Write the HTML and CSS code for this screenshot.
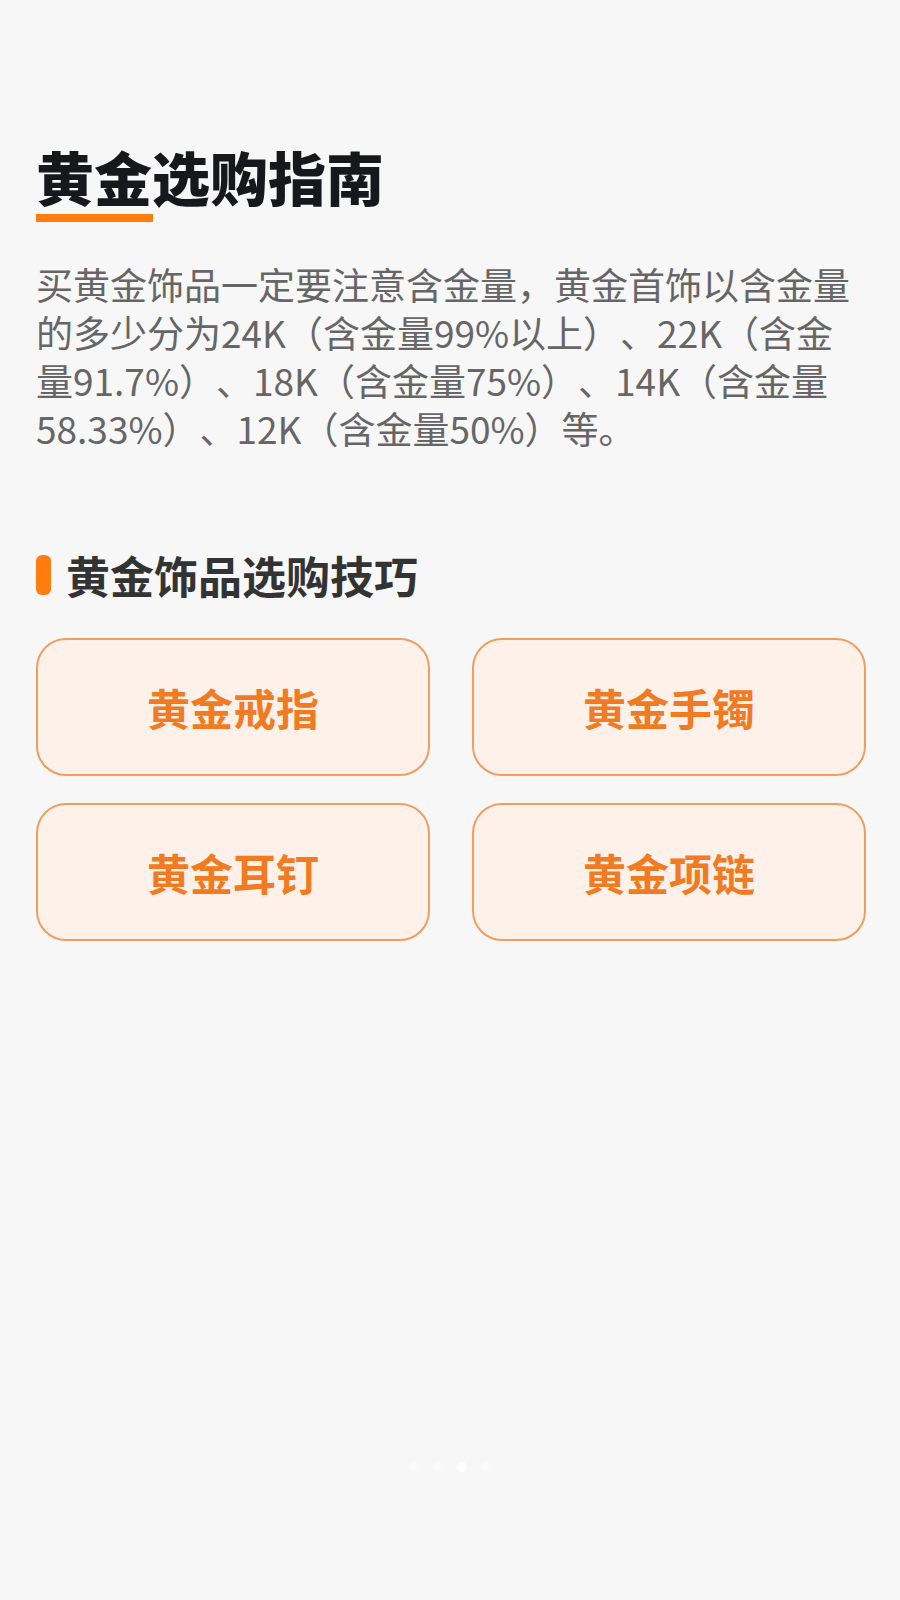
FILE: index.html
```html
<!DOCTYPE html>
<html lang="zh-CN">
<head>
    <meta charset="UTF-8">
    <meta name="viewport" content="width=device-width, initial-scale=1.0">
    <title>黄金选购指南</title>
    <link rel="stylesheet" href="styles.css">
</head>
<body>
    <div class="page">
        <h1 class="title">黄金选购指南</h1>
        <div class="title-line"></div>
        <p class="intro">买黄金饰品一定要注意含金量，黄金首饰以含金量的多少分为24K（含金量99%以上）、22K（含金量91.7%）、18K（含金量75%）、14K（含金量58.33%）、12K（含金量50%）等。</p>

        <h2 class="section-title"><span class="bar"></span>黄金饰品选购技巧</h2>
        <div class="tips">
            <div class="tip">黄金戒指</div>
            <div class="tip">黄金手镯</div>
            <div class="tip">黄金耳钉</div>
            <div class="tip">黄金项链</div>
        </div>
    </div>
    <div class="dots">
        <span class="dot"></span>
        <span class="dot"></span>
        <span class="dot active"></span>
        <span class="dot"></span>
    </div>
</body>
</html>
```

FILE: styles.css
```css
body {
    margin: 0;
    background: #f7f7f7;
    font-family: "Noto Sans CJK SC", "Noto Sans", sans-serif;
    width: 900px;
    height: 1600px;
    position: relative;
}
.page {
    padding: 144px 36px 0 36px;
}
.title {
    margin: 0;
    font-size: 58px;
    line-height: 64px;
    font-weight: 900;
    color: #17181c;
}
.title-line {
    width: 117px;
    height: 8px;
    margin-top: 6px;
    background: #ff7d0f;
}
.intro {
    margin: 38px 0 0 0;
    font-size: 37px;
    line-height: 48px;
    color: #666;
    text-spacing-trim: space-all;
}
.section-title {
    display: flex;
    align-items: center;
    margin: 99px 0 0 0;
    font-size: 44px;
    line-height: 48px;
    font-weight: 700;
    color: #333;
}
.bar {
    width: 15px;
    height: 40px;
    border-radius: 6px;
    background: #ff7d0f;
    margin-right: 15px;
}
.tips {
    display: grid;
    grid-template-columns: 394px 394px;
    column-gap: 42px;
    row-gap: 27px;
    margin-top: 39px;
}
.tip {
    height: 134px;
    border: 2px solid #ee9f5f;
    border-radius: 30px;
    background: #fdf1ea;
    color: #f07b22;
    font-size: 43px;
    font-weight: 700;
    display: flex;
    align-items: center;
    justify-content: center;
}
.dots {
    position: absolute;
    left: 0;
    right: 0;
    top: 1462px;
    display: flex;
    justify-content: center;
    gap: 14px;
}
.dot {
    width: 10px;
    height: 10px;
    border-radius: 50%;
    background: #fafafa;
}
.dot.active {
    background: #fff;
}
```
